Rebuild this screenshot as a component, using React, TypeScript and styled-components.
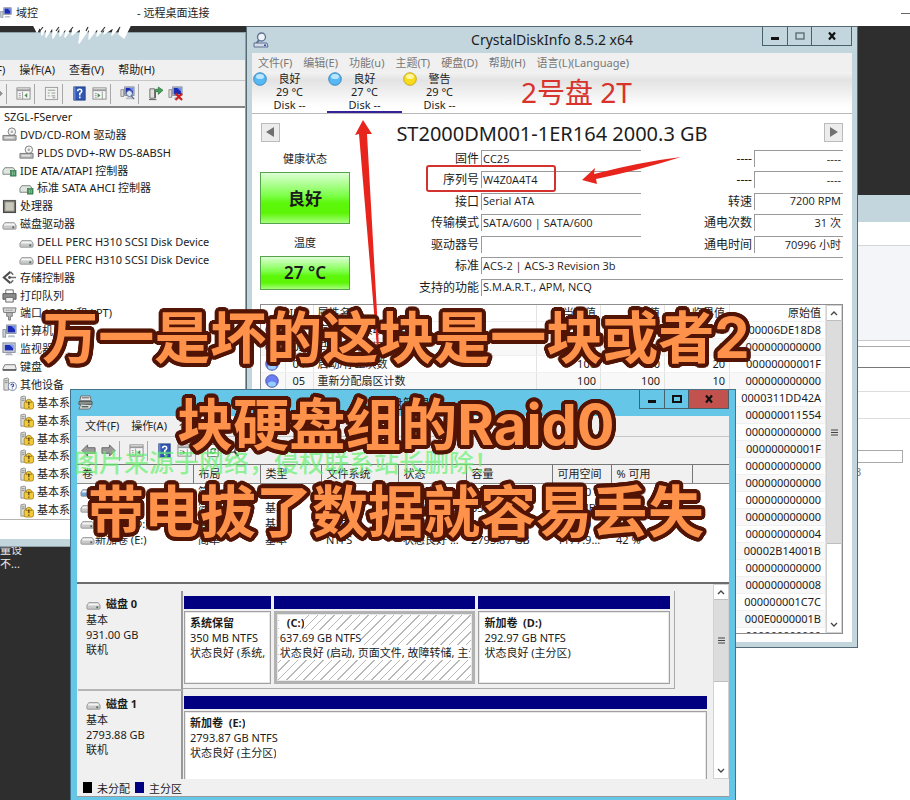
import React from "react";
import styled, { createGlobalStyle, css } from "styled-components";

const GlobalStyle = createGlobalStyle`
  * { box-sizing: border-box; }
  body {
    margin: 0;
    background: #2e2e2e;
    color: #1c1c1c;
    font-family: "Noto Sans", "Noto Sans CJK SC", sans-serif;
    font-size: 11px;
  }
  button, input { font: inherit; color: inherit; }
  svg { display: block; flex: none; }
`;

/* ---------- icons ---------- */

type IconName =
  | "drive" | "dvd" | "ide" | "cpu" | "storage" | "printer" | "port" | "computer"
  | "monitor" | "keyboard" | "unknown" | "warn" | "paneLeft" | "paneRight" | "props"
  | "help" | "scan" | "update" | "remove" | "back" | "forward" | "refresh" | "diskMgr"
  | "blueDrive" | "magnifier" | "search";

const driveShape = (fill: string) => (
  <g>
    <path d="M3 6 L13 6 L15 9 L15 12 Q15 13 14 13 L2 13 Q1 13 1 12 L1 9 Z" fill={fill} stroke="#8c8c8c" strokeWidth=".9" />
    <path d="M3 7 L13 7 L14 9 L2 9 Z" fill="#f4f4f4" />
    <rect x="11" y="10" width="2" height="2" fill="#4f6a52" />
  </g>
);

const screenShape = (
  <g>
    <rect x="5" y="1" width="10" height="9" fill="#cdd3de" stroke="#6f7686" strokeWidth=".8" />
    <rect x="6" y="2" width="8" height="7" fill="#1b2bb4" />
    <path d="M10 2 L14 2 L14 6 Z" fill="#6f8df0" />
    <path d="M7 12 L13 12 L14 14 L6 14 Z" fill="#b9bec8" />
  </g>
);

const paneShape = (
  <g>
    <rect x="1" y="2" width="14" height="12" fill="#f6f6f6" stroke="#8c8c8c" />
    <path d="M1 4.5 H15" stroke="#9a9a9a" strokeWidth="2" />
    <path d="M3 8 H5 M3 10 H5 M3 12 H5" stroke="#9a9a9a" />
  </g>
);

const towerShape = (
  <g>
    <path d="M2 2 L6 1 L7 2 L7 14 L2 14 Z" fill="#dcdcd6" stroke="#868686" strokeWidth=".9" />
    <path d="M3 4 H6 M3 6 H6" stroke="#8b8b8b" />
  </g>
);

const icons: Record<IconName, React.ReactNode> = {
  drive: driveShape("#c9c9c9"),
  blueDrive: driveShape("#6da5dc"),
  dvd: (
    <g>
      <circle cx="10.500" cy="5" r="4" fill="#f2f2f2" stroke="#7d7d7d" />
      <circle cx="10.500" cy="5" r="1.300" fill="#aaa" />
      <path d="M1 9 L15 9 L15 14 L1 14 Z" fill="#bcbcbc" stroke="#777" />
      <path d="M3 11.500 H12" stroke="#f5f5f5" />
    </g>
  ),
  ide: (
    <g>
      <path d="M3 5 L12 5 L14 8 L14 12 L1 12 L1 8 Z" fill="#dfe6df" stroke="#7b857b" />
      <rect x="9" y="8" width="6" height="6" fill="#3e8d59" stroke="#2c6b40" strokeWidth=".6" />
      <path d="M11 9 V13 M13 9 V13" stroke="#b9e2c5" strokeWidth=".7" />
    </g>
  ),
  cpu: (
    <g>
      <rect x="1" y="1" width="14" height="14" fill="#4b4b4b" />
      <rect x="3" y="3" width="10" height="10" fill="#c9c6bb" stroke="#8c897c" />
      <path d="M2 2 H15" stroke="#888" strokeDasharray="1 1" />
    </g>
  ),
  storage: (
    <g>
      <path d="M9 2 L2 8 L9 14" fill="none" stroke="#4d4d4d" strokeWidth="2.200" />
      <path d="M9 2 L12 5 M9 14 L12 11 M8 8 H15" fill="none" stroke="#6d6d6d" strokeWidth="1.600" />
      <circle cx="8" cy="8" r="1.500" fill="#555" />
    </g>
  ),
  printer: (
    <g>
      <path d="M4 2 H12 V7 H4 Z" fill="#fff" stroke="#666" />
      <path d="M1 6 H15 V12 H1 Z" fill="#8c8c8c" stroke="#555" />
      <path d="M4 10 H12 V15 H4 Z" fill="#efefef" stroke="#666" />
    </g>
  ),
  port: (
    <g>
      <path d="M1 2 H15 L14 7 H2 Z" fill="#d9d9d9" stroke="#777" />
      <path d="M5 7 H11 V11 H9 V15 H7 V11 H5 Z" fill="#b7b7b7" stroke="#7a7a7a" />
      <path d="M4 4.500 H12" stroke="#666" strokeDasharray="1 1" />
    </g>
  ),
  computer: (
    <g>
      {screenShape}
      <rect x="1" y="6" width="3" height="8" fill="#cbd2da" stroke="#74808c" strokeWidth=".8" />
    </g>
  ),
  monitor: (
    <g>
      <rect x="1" y="1" width="13" height="10" fill="#d2d6dd" stroke="#7c8290" />
      <rect x="3" y="3" width="9" height="6" fill="#1d2fb5" />
      <path d="M8 3 H12 V7 Z" fill="#7d9bf4" />
      <path d="M5 12 H10 L12 14 H3 Z" fill="#b2b6bf" />
    </g>
  ),
  keyboard: (
    <g>
      <path d="M3 5 H14 L15 9 V11 H1 V9 Z" fill="#ececec" stroke="#777" />
      <path d="M1 10.500 H15" stroke="#555" strokeWidth="1.500" />
    </g>
  ),
  unknown: (
    <g>
      {towerShape}
      <circle cx="11" cy="10" r="4.300" fill="#fff" stroke="#7483ac" />
      <path d="M9.500 9 Q9.500 7.500 11 7.500 Q12.500 7.500 12.400 9 Q12 10 11 10.300 V11.200 M11 12.200 V13" fill="none" stroke="#3349a0" strokeWidth="1.200" />
    </g>
  ),
  warn: (
    <g>
      {towerShape}
      <rect x="5.500" y="7" width="10" height="8" rx="2" fill="#f3c93c" stroke="#9b7a12" strokeWidth=".8" />
      <path d="M7.500 8 Q7.500 4.500 10.500 4.500 Q13.500 4.500 13.500 8 Z" fill="#f3c93c" stroke="#9b7a12" strokeWidth=".8" />
      <path d="M10.500 7 V11 M10.500 12.200 V13.600" stroke="#4a3a08" strokeWidth="1.300" />
    </g>
  ),
  paneLeft: (
    <g>
      {paneShape}
      <path d="M7 6 V14" stroke="#9a9a9a" />
      <path d="M12 7.500 V12.500 L9 10 Z" fill="#4e8f4e" />
    </g>
  ),
  paneRight: (
    <g>
      {paneShape}
      <path d="M11 6 V14" stroke="#9a9a9a" />
      <path d="M6 7.500 V12.500 L9 10 Z" fill="#4e8f4e" />
    </g>
  ),
  props: (
    <g>
      <rect x="1.500" y="1.500" width="13" height="13" fill="#f2f2f2" stroke="#9b9b9b" />
      <path d="M4 4.500 H12 M4 7.500 H6 M8 7.500 H12 M4 10.500 H6 M8 10.500 H12 M9 12.500 H12" stroke="#8e9a8e" />
    </g>
  ),
  help: (
    <g>
      <rect x="2" y="1" width="12" height="14" fill="#3057b4" stroke="#233f86" />
      <path d="M3 1 V15" stroke="#86a2e0" />
      <path d="M6 5.500 Q6 3.500 8.200 3.500 Q10.500 3.500 10.300 5.700 Q10 7.200 8.300 8 V10 M8.300 11.300 V13" fill="none" stroke="#fff" strokeWidth="1.700" />
    </g>
  ),
  scan: (
    <g>
      {screenShape}
      <rect x="1" y="4" width="3" height="7" fill="#ddd" stroke="#777" strokeWidth=".8" />
      <circle cx="10" cy="8" r="3.200" fill="#d9e7fa" stroke="#5b6a8c" />
      <path d="M12 10.500 L15 14" stroke="#5b6a8c" strokeWidth="1.500" />
    </g>
  ),
  update: (
    <g>
      <path d="M2 3 H7 V13 H2 Z" fill="#e1e1dc" stroke="#666" />
      <path d="M1 14.500 H9" stroke="#555" />
      <path d="M8 13 V6 H11 V9 L16 4.500 L11 1 V3.500 H8 Z" fill="#43a05a" stroke="#256d38" strokeWidth=".7" />
    </g>
  ),
  remove: (
    <g>
      {screenShape}
      <rect x="1" y="4" width="3" height="8" fill="#ddd" stroke="#777" strokeWidth=".8" />
      <path d="M8 8 L15 15 M15 8 L8 15" stroke="#cf1f1f" strokeWidth="2.200" />
    </g>
  ),
  back: <path d="M1 8 L7 2 V5 H15 V11 H7 V14 Z" fill="#9a9a9a" stroke="#686868" />,
  forward: <path d="M15 8 L9 2 V5 H1 V11 H9 V14 Z" fill="#9a9a9a" stroke="#686868" />,
  refresh: (
    <g>
      <path d="M3 1.500 H11 L14 4.500 V14.500 H3 Z" fill="#fff" stroke="#666" />
      <path d="M6 8 A3 3 0 0 1 11 7 M11 9 A3 3 0 0 1 6 10" fill="none" stroke="#2e8a3e" strokeWidth="1.500" />
      <path d="M12 5 V8 H9 Z M5 12 V9 H8 Z" fill="#2e8a3e" />
    </g>
  ),
  search: (
    <g>
      <circle cx="7" cy="6" r="4" fill="#fff" stroke="#555" strokeWidth="1.500" />
      <path d="M10 9 L14 14" stroke="#333" strokeWidth="2" />
    </g>
  ),
  diskMgr: (
    <g>
      <path d="M3 1 H13 L14 6 H2 Z" fill="#e8e8e8" stroke="#6d6d6d" />
      <path d="M4 3 H12" stroke="#555" />
      <path d="M1 7 H15 V10 H1 Z" fill="#8d9790" stroke="#555" />
      <path d="M3 10 L1 15 H12 L15 11" fill="#dcdcdc" stroke="#6d6d6d" />
      <path d="M4 12.500 H11" stroke="#4b6b56" strokeWidth="1.500" />
    </g>
  ),
  magnifier: (
    <g>
      <circle cx="8.500" cy="5" r="4" fill="#eef3f8" stroke="#5e6f92" strokeWidth="1.300" />
      <path d="M6 8 L3 12" stroke="#5e6f92" strokeWidth="2" />
      <path d="M1 11 H14 L15 15 H1 Z" fill="#d5dbe6" stroke="#5e6f92" />
      <rect x="11" y="12.500" width="2" height="1.500" fill="#2c4ec0" />
    </g>
  ),
};

const Icon = ({ name, size = 15 }: { name: IconName; size?: number }) => (
  <svg width={size} height={size} viewBox="0 0 16 16" aria-hidden="true">{icons[name]}</svg>
);

const Ball = ({ hue, size = 14 }: { hue: "blue" | "yellow" | "violet"; size?: number }) => {
  const [light, mid, edge] = {
    blue: ["#d4f1ff", "#58b8f3", "#2a78b8"],
    yellow: ["#fffbc0", "#f8dc1c", "#b89a10"],
    violet: ["#9fe4ff", "#6a7df2", "#46469c"],
  }[hue];
  return (
    <svg width={size} height={size} viewBox="0 0 14 14" aria-hidden="true">
      <circle cx="7" cy="7" r="6.300" fill={mid} stroke={edge} strokeWidth=".8" />
      <ellipse cx="7" cy={hue === "violet" ? 10 : 4.5} rx="4" ry="2.600" fill={light} opacity=".8" />
    </svg>
  );
};

/* ---------- desktop and shared window parts ---------- */

const Desktop = styled.main`
  position: relative;
  min-height: 100vh;
  overflow: hidden;
`;

const SessionBar = styled.header`
  display: flex;
  align-items: center;
  height: 26px;
  background: #fff;
  line-height: 24px;
`;
const SessionName = styled.span`
  width: 125px;
  padding-left: 4px;
`;
const SessionMinimize = styled.button`
  width: 9px;
  height: 20px;
  margin-left: auto;
  padding: 0;
  border: 0;
  background: linear-gradient(#666, #666) center / 100% 1px no-repeat;
`;

const Scribble = styled.svg`
  position: absolute;
  left: 28px;
  top: 22px;
`;

const DeskLabel = styled.div`
  position: absolute;
  left: 0;
  top: 543px;
  color: #e8e8e8;
  line-height: 14px;
`;

const WindowFrame = styled.section<{ $tone: string; $edge: string }>`
  position: absolute;
  display: flex;
  flex-direction: column;
  padding: 0 6px 6px;
  background: ${(p) => p.$tone};
  border: 1px solid ${(p) => p.$edge};
`;
const TitleBar = styled.div<{ $height: number }>`
  display: flex;
  align-items: flex-start;
  flex: none;
  height: ${(p) => p.$height}px;
`;
const TitleIcon = styled.span`
  width: 90px;
  padding: 5px 1px;
`;
const TitleText = styled.h1`
  flex: 1;
  margin: 0;
  font-size: 13px;
  font-weight: 400;
  line-height: 26px;
  text-align: center;
`;
const Controls = styled.div`
  display: flex;
  border: 1px solid #46606c;
  border-top: 0;
`;
const ControlButton = styled.button<{ $width: number; $danger?: boolean }>`
  display: flex;
  align-items: center;
  justify-content: center;
  width: ${(p) => p.$width}px;
  height: 18px;
  padding: 0;
  border: 0;
  border-left: 1px solid #46606c;
  background: ${(p) => (p.$danger ? "#c2524e" : "transparent")};
  &:first-child { border-left: 0; }
`;

const WindowControls = ({ danger, dim }: { danger?: boolean; dim?: boolean }) => (
  <Controls>
    <ControlButton $width={24} aria-label="最小化">
      <svg width="10" height="10" viewBox="0 0 10 10"><path d="M1 7.500 H9" stroke="#111" strokeWidth="3" /></svg>
    </ControlButton>
    <ControlButton $width={24} aria-label="最大化">
      <svg width="10" height="10" viewBox="0 0 10 10"><rect x="1" y="2" width="8" height="6" fill="none" stroke={dim ? "#55666e" : "#111"} strokeWidth={dim ? 1.3 : 2} /></svg>
    </ControlButton>
    <ControlButton $width={40} $danger={danger} aria-label="关闭">
      <svg width="10" height="10" viewBox="0 0 10 10"><path d="M2 1.500 L8 8.500 M8 1.500 L2 8.500" stroke="#111" strokeWidth="2.200" /></svg>
    </ControlButton>
  </Controls>
);

const MenuBar = styled.nav<{ $gap: number; $muted?: boolean; $pad: number; $height: number }>`
  display: flex;
  align-items: center;
  flex: none;
  gap: ${(p) => p.$gap}px;
  height: ${(p) => p.$height}px;
  padding-left: ${(p) => p.$pad}px;
  background: #f0f0f0;
  color: ${(p) => (p.$muted ? "#777" : "#1c1c1c")};
`;
const MenuButton = styled.button`
  padding: 0;
  border: 0;
  background: none;
  white-space: nowrap;
  line-height: 18px;
`;
const ToolBar = styled.div<{ $pad: number; $height: number }>`
  display: flex;
  align-items: center;
  flex: none;
  gap: 5px;
  height: ${(p) => p.$height}px;
  padding-left: ${(p) => p.$pad}px;
  background: #f0f0f0;
  border-top: 1px solid #c6c6c6;
`;
const ToolButton = styled.button`
  padding: 0;
  border: 0;
  background: none;
`;
const Separator = styled.span`
  width: 1px;
  height: 20px;
  margin: 0 4px 0 -2px;
  background: #a8a8a8;
`;

const Tools = ({ items }: { items: (IconName | "|")[] }) => (
  <>
    {items.map((item, i) =>
      item === "|" ? <Separator key={i} /> : (
        <ToolButton key={i} aria-label={item}><Icon name={item} /></ToolButton>
      ),
    )}
  </>
);

/* ---------- scroll bar ---------- */

const ScrollTrack = styled.div`
  display: flex;
  flex-direction: column;
  flex: none;
  width: 16px;
  background: #fff;
  border: 1px solid #d2d2d2;
`;
const ScrollEnd = styled.button`
  display: flex;
  align-items: center;
  justify-content: center;
  height: 14px;
  padding: 0;
  border: 0;
  background: #fff;
`;
const ScrollThumb = styled.div<{ $size: number }>`
  display: flex;
  align-items: center;
  justify-content: center;
  height: ${(p) => p.$size}px;
  margin-bottom: auto;
  background: #dcdcdc;
  border: 1px solid #bebebe;
  border-width: 1px 0;
`;

const ScrollBar = ({ thumb }: { thumb: number }) => (
  <ScrollTrack>
    <ScrollEnd aria-label="向上"><svg width="8" height="6" viewBox="0 0 8 6"><path d="M1 5 L4 2 L7 5" fill="none" stroke="#444" strokeWidth="1.300" /></svg></ScrollEnd>
    <ScrollThumb $size={thumb}>
      <svg width="7" height="7" viewBox="0 0 7 7"><path d="M0 1 H7 M0 3.500 H7 M0 6 H7" stroke="#444" /></svg>
    </ScrollThumb>
    <ScrollEnd aria-label="向下"><svg width="8" height="6" viewBox="0 0 8 6"><path d="M1 1 L4 4 L7 1" fill="none" stroke="#444" strokeWidth="1.300" /></svg></ScrollEnd>
  </ScrollTrack>
);

/* ---------- device manager ---------- */

const DeviceWindow = styled(WindowFrame)`
  left: -40px;
  top: 32px;
  width: 286px;
  padding: 0 0 7px;
`;
const TreePane = styled.div`
  height: 433px;
  background: #fff;
  border-top: 2px solid #858585;
`;
const Tree = styled.ul`
  display: grid;
  grid-auto-rows: 1fr;
  height: 412px;
  margin: 0;
  padding: 0;
  list-style: none;
  border-bottom: 1px solid #b5b5b5;
`;
const TreeItem = styled.li<{ $depth: number }>`
  display: flex;
  align-items: center;
  gap: 3px;
  padding-left: ${(p) => [43, 41, 58][p.$depth]}px;
  white-space: nowrap;
  line-height: 16px;
`;

const devices: [number, IconName | null, string][] = [
  [0, null, "SZGL-FServer"],
  [1, "dvd", "DVD/CD-ROM 驱动器"],
  [2, "dvd", "PLDS DVD+-RW DS-8ABSH"],
  [1, "ide", "IDE ATA/ATAPI 控制器"],
  [2, "ide", "标准 SATA AHCI 控制器"],
  [1, "cpu", "处理器"],
  [1, "drive", "磁盘驱动器"],
  [2, "drive", "DELL PERC H310 SCSI Disk Device"],
  [2, "drive", "DELL PERC H310 SCSI Disk Device"],
  [1, "storage", "存储控制器"],
  [1, "printer", "打印队列"],
  [1, "port", "端口 (COM 和 LPT)"],
  [1, "computer", "计算机"],
  [1, "monitor", "监视器"],
  [1, "keyboard", "键盘"],
  [1, "unknown", "其他设备"],
  ...Array.from({ length: 7 }, (): [number, IconName, string] => [2, "warn", "基本系统设备"]),
];

const DeviceManager = () => (
  <DeviceWindow $tone="#c3d6de" $edge="#8fa3ab">
    <TitleBar $height={27} />
    <MenuBar $gap={14} $pad={10} $height={20}>
      {["文件(F)", "操作(A)", "查看(V)", "帮助(H)"].map((m) => <MenuButton key={m}>{m}</MenuButton>)}
    </MenuBar>
    <ToolBar $pad={27} $height={26}>
      <Tools items={["forward", "|", "paneLeft", "|", "props", "|", "help", "paneRight", "|", "scan", "|", "update", "remove"]} />
    </ToolBar>
    <TreePane>
      <Tree>
        {devices.map(([depth, icon, label], i) => (
          <TreeItem key={i} $depth={depth}>{icon && <Icon name={icon} />}{label}</TreeItem>
        ))}
      </Tree>
    </TreePane>
  </DeviceWindow>
);

/* ---------- background window ---------- */

const BackWindow = styled.section`
  position: absolute;
  left: 736px;
  right: 0;
  top: 195px;
  bottom: 0;
  background: #fff;
  border-top: 27px solid #c3d6de;
`;
const BackBand = styled.div`
  height: 96px;
  margin-top: 23px;
  background: #f4f5f8;
  border-top: 1px solid #d5d7da;
  border-bottom: 1px solid #c9c9c9;
`;
const BackRow = styled.div<{ $height: number; $line: string }>`
  height: ${(p) => p.$height}px;
  border-bottom: 1px solid ${(p) => p.$line};
`;
const BackField = styled.div`
  height: 13px;
  margin: 31px 7px 0 0;
  border: 1px solid #aaa;
`;
const BackText = styled.div`
  padding-left: 119px;
  color: #777;
  line-height: 18px;
`;

/* ---------- CrystalDiskInfo ---------- */

const InfoWindow = styled(WindowFrame)`
  left: 246px;
  right: 52px;
  top: 26px;
  padding: 0 5px 5px;
`;
const InfoTitle = styled(TitleText)`
  font-size: 14px;
  white-space: nowrap;
`;
const DiskTabs = styled.div`
  display: flex;
  height: 42px;
  background: linear-gradient(#f3f3f3, #e3e3e3 20%, #fff 85%);
  border-bottom: 1px solid #b9b9b9;
`;
const DiskTab = styled.button<{ $active?: boolean }>`
  display: flex;
  align-items: flex-start;
  width: 75px;
  padding: 0 0 0 1px;
  border: 0;
  background: none;
  ${(p) => p.$active && css`box-shadow: inset 0 -2px #34239b;`}
`;
const DiskTabText = styled.span`
  flex: 1;
  padding-right: 15px;
  line-height: 13px;
  white-space: pre;
  text-align: center;
`;
const InfoBody = styled.div`
  padding: 0 9px 8px 8px;
  background: #fff;
`;
const ModelRow = styled.div`
  display: flex;
  align-items: center;
  justify-content: space-between;
  height: 36px;
  padding-left: 1px;
`;
const StepButton = styled.button`
  display: flex;
  align-items: center;
  justify-content: center;
  width: 19px;
  height: 19px;
  padding: 0;
  border: 1px solid #bbb;
  background: #ececec;
`;
const Model = styled.h2`
  margin: 0;
  padding-top: 3px;
  font-size: 20px;
  font-weight: 400;
  line-height: 33px;
  white-space: nowrap;
`;
const Summary = styled.div`
  display: flex;
  height: 150px;
`;
const Health = styled.div`
  display: flex;
  flex-direction: column;
  width: 90px;
  text-align: center;
`;
const HealthLabel = styled.span`
  line-height: 18px;
`;
const HealthButton = styled.button<{ $height: number }>`
  height: ${(p) => p.$height}px;
  margin: 4px 0 10px;
  padding: 0;
  border: 1px solid #57a34c;
  background: linear-gradient(#ddffd5, #7dff4a 45%, #5cf70a 60%, #5cf505 80%, #a6ff7c);
  font-size: 17px;
  font-weight: 600;
`;
const Fields = styled.div`
  display: grid;
  flex: 1;
  grid-template-columns: 131px 160px 1fr 89px;
  grid-auto-rows: 1fr;
`;
const FieldLabel = styled.label`
  padding-right: 2px;
  font-size: 12px;
  line-height: 17px;
  text-align: right;
  white-space: nowrap;
`;
const FieldBox = styled.input<{ $wide?: boolean; $right?: boolean }>`
  width: 100%;
  min-width: 0;
  height: 17px;
  padding: 0 2px 2px 1px;
  border: 1px solid #9a9a9a;
  border-width: 1px 0 0 1px;
  background: #fff;
  font-family: "Open Sans", "Noto Sans CJK SC", sans-serif;
  text-align: ${(p) => (p.$right ? "right" : "left")};
  ${(p) => p.$wide && css`grid-column: 2 / -1;`}
`;

const fields: { label: string; value: string; right?: boolean; wide?: boolean }[] = [
  { label: "固件", value: "CC25" },
  { label: "----", value: "----", right: true },
  { label: "序列号", value: "W4Z0A4T4" },
  { label: "----", value: "----", right: true },
  { label: "接口", value: "Serial ATA" },
  { label: "转速", value: "7200 RPM", right: true },
  { label: "传输模式", value: "SATA/600 | SATA/600" },
  { label: "通电次数", value: "31 次", right: true },
  { label: "驱动器号", value: "" },
  { label: "通电时间", value: "70996 小时", right: true },
  { label: "标准", value: "ACS-2 | ACS-3 Revision 3b", wide: true },
  { label: "支持的功能", value: "S.M.A.R.T., APM, NCQ", wide: true },
];

const AttributePane = styled.div`
  display: flex;
  height: 330px;
  margin-top: 4px;
  overflow: hidden;
  border: 1px solid #8e8e8e;
`;
const AttributeScroll = styled.div`
  flex: 1;
  overflow: hidden;
`;
const AttributeTable = styled.table`
  width: 100%;
  table-layout: fixed;
  border-collapse: collapse;
  th, td {
    height: 17px;
    padding: 0 4px;
    border-right: 1px solid #e3e3e3;
    border-bottom: 1px solid #f0f0f0;
    font-weight: 400;
    line-height: 16px;
    text-align: right;
    white-space: nowrap;
  }
  th {
    height: 16px;
    line-height: 15px;
  }
  tbody tr:nth-child(even) { background: #f8f8f8; }
  th:nth-child(-n + 3), td:nth-child(-n + 3) { text-align: left; }
  td:nth-child(2) { padding-left: 7px; }
`;

const raws = [
  "000006DE18D8", "000000000000", "00000000001F", "000000000000", "0000311DD42A",
  "000000011554", "000000000000", "00000000001F", "000000000000", "000000000000",
  "000000000000", "000000000000", "000000000004", "00002B14001B", "000000000000",
  "000000000008", "000000001C7C", "000E0000001B", "000000000000",
];
const attributes: string[][] = [
  ["01", "底层数据读取错误率", "118", "99", "6"],
  ["03", "马达旋转时间", "96", "96", "0"],
  ["04", "启动/停止次数", "100", "100", "20"],
  ["05", "重新分配扇区计数", "100", "100", "10"],
];

const DiskInfo = () => (
  <InfoWindow $tone="#c3d6de" $edge="#566a73">
    <TitleBar $height={26}>
      <TitleIcon><Icon name="magnifier" size={16} /></TitleIcon>
      <InfoTitle>CrystalDiskInfo 8.5.2 x64</InfoTitle>
      <WindowControls dim />
    </TitleBar>
    <MenuBar $gap={11} $pad={6} $height={19} $muted>
      {["文件(F)", "编辑(E)", "功能(u)", "主题(T)", "硬盘(D)", "帮助(H)", "语言(L)(Language)"].map((m) => (
        <MenuButton key={m}>{m}</MenuButton>
      ))}
    </MenuBar>
    <DiskTabs>
      <DiskTab><Ball hue="blue" /><DiskTabText>{"良好\n29 °C\nDisk --"}</DiskTabText></DiskTab>
      <DiskTab $active><Ball hue="blue" /><DiskTabText>{"良好\n27 °C\nDisk --"}</DiskTabText></DiskTab>
      <DiskTab><Ball hue="yellow" /><DiskTabText>{"警告\n29 °C\nDisk --"}</DiskTabText></DiskTab>
    </DiskTabs>
    <InfoBody>
      <ModelRow>
        <StepButton aria-label="上一个"><svg width="9" height="10" viewBox="0 0 9 10"><path d="M8 0 V10 L0 5 Z" fill="#707070" /></svg></StepButton>
        <Model>ST2000DM001-1ER164 2000.3 GB</Model>
        <StepButton aria-label="下一个"><svg width="9" height="10" viewBox="0 0 9 10"><path d="M1 0 V10 L9 5 Z" fill="#707070" /></svg></StepButton>
      </ModelRow>
      <Summary>
        <Health>
          <HealthLabel>健康状态</HealthLabel>
          <HealthButton $height={53}>良好</HealthButton>
          <HealthLabel>温度</HealthLabel>
          <HealthButton $height={35}>27 °C</HealthButton>
        </Health>
        <Fields>
          {fields.map((f, i) => (
            <React.Fragment key={i}>
              <FieldLabel htmlFor={`field-${i}`}>{f.label}</FieldLabel>
              <FieldBox id={`field-${i}`} readOnly value={f.value} $right={f.right} $wide={f.wide} />
            </React.Fragment>
          ))}
        </Fields>
      </Summary>
      <AttributePane>
        <AttributeScroll>
          <AttributeTable>
            <colgroup>
              <col width="24" /><col width="28" /><col /><col width="64" /><col width="64" /><col width="65" /><col width="96" />
            </colgroup>
            <thead>
              <tr><th /><th>ID</th><th>属性名</th><th>当前值</th><th>最差值</th><th>临界值</th><th>原始值</th></tr>
            </thead>
            <tbody>
              {raws.map((raw, i) => {
                const row = attributes[i];
                return (
                  <tr key={i}>
                    <td>{row && <Ball hue="violet" />}</td>
                    {[0, 1, 2, 3, 4].map((c) => <td key={c}>{row?.[c]}</td>)}
                    <td>{raw}</td>
                  </tr>
                );
              })}
            </tbody>
          </AttributeTable>
        </AttributeScroll>
        <ScrollBar thumb={224} />
      </AttributePane>
    </InfoBody>
  </InfoWindow>
);

/* ---------- disk management ---------- */

const ManagerWindow = styled(WindowFrame)`
  left: 70px;
  right: 174px;
  top: 389px;
`;
const VolumePane = styled.div`
  height: 120px;
  background: #fff;
  border-top: 1px solid #777;
  border-bottom: 2px solid #6c6c6c;
`;
const VolumeTable = styled.table`
  width: 100%;
  table-layout: fixed;
  border-collapse: collapse;
  th {
    height: 18px;
    padding: 0 5px;
    border-right: 1px solid #777;
    border-bottom: 1px solid #8a8a8a;
    background: #f0f0f0;
    font-weight: 400;
    line-height: 17px;
    text-align: left;
    white-space: nowrap;
  }
  th:last-child { border-right: 0; }
  td {
    height: 16px;
    padding: 0 5px;
    line-height: 16px;
    overflow: hidden;
    text-overflow: ellipsis;
    white-space: nowrap;
  }
  td:first-child { padding-left: 3px; }
`;
const VolumeName = styled.span`
  display: flex;
  align-items: center;
`;
const GraphPane = styled.div`
  display: flex;
  height: 195px;
  background: #f0f0f0;
`;
const DiskList = styled.div`
  flex: 1;
  min-width: 0;
  padding: 7px 2px 0 1px;
  overflow: hidden;
`;
const DiskRow = styled.div`
  display: flex;
  height: 100px;
`;
const DiskCaption = styled.div`
  width: 105px;
  padding: 5px 8px;
  border-right: 2px solid #999;
  border-bottom: 2px solid #b5b5b5;
  line-height: 15px;
`;
const DiskTitle = styled.strong`
  display: flex;
  align-items: center;
  gap: 5px;
  line-height: 16px;
`;
const Partitions = styled.div<{ $short?: boolean }>`
  display: flex;
  flex: 1;
  gap: 3px;
  min-width: 0;
  margin-right: ${(p) => (p.$short ? 36 : 0)}px;
  padding: 5px 4px 4px 1px;
  border-right: ${(p) => (p.$short ? "1px solid #aaa" : 0)};
  border-bottom: ${(p) => (p.$short ? "1px solid #aaa" : 0)};
  margin-bottom: 2px;
`;
const Partition = styled.div<{ $share: number }>`
  display: flex;
  flex-direction: column;
  flex: ${(p) => p.$share} 1 0;
  min-width: 0;
  border-top: 13px solid #000080;
`;
const PartitionBody = styled.div<{ $selected?: boolean }>`
  flex: 1;
  margin-top: 2px;
  padding: 3px 4px;
  overflow: hidden;
  line-height: 15px;
  white-space: nowrap;
  background: #fff;
  border: 1px solid #a0a0a0;
  box-shadow: inset 0 0 0 1px #e8e8e8;
  ${(p) => p.$selected && css`
    padding: 1px 2px;
    border: 3px solid #b2b2b2;
    background: repeating-linear-gradient(135deg, #fff 0 5px, #b8b8b8 5px 6px);
  `}
`;
const PartitionLine = styled.div<{ $selected?: boolean; $strong?: boolean }>`
  width: fit-content;
  max-width: 100%;
  overflow: hidden;
  padding-left: ${(p) => (p.$selected && p.$strong ? 8 : 1)}px;
  font-weight: ${(p) => (p.$strong ? 700 : 400)};
  white-space: pre;
  background: #fff;
`;
const Legend = styled.div`
  display: flex;
  align-items: center;
  gap: 5px;
  height: 18px;
  padding-left: 6px;
  background: #f0f0f0;
  border-bottom: 1px solid #999;
`;
const Swatch = styled.span<{ $color: string }>`
  width: 9px;
  height: 11px;
  background: ${(p) => p.$color};
`;

const volumes: [IconName, ...string[]][] = [
  ["blueDrive", " (C:)", "简单", "基本", "NTFS", "状态良好 (启动)", "637.69 GB", "590.70 GB", "93 %"],
  ["drive", "系统保留", "简单", "基本", "NTFS", "状态良好 (系统)", "350 MB", "115 MB", "33 %"],
  ["drive", "新加卷 (D:)", "简单", "基本", "NTFS", "状态良好 (主分区)", "292.97 GB", "132.80 GB", "45 %"],
  ["drive", "新加卷 (E:)", "简单", "基本", "NTFS", "状态良好 (主分区)", "2793.87 GB", "1177.91 GB", "42 %"],
];

const PartitionCell = ({ share, lines, selected }: { share: number; lines: string[]; selected?: boolean }) => (
  <Partition $share={share}>
    <PartitionBody $selected={selected}>
      {lines.map((l, i) => <PartitionLine key={l} $strong={i === 0} $selected={selected}>{l}</PartitionLine>)}
    </PartitionBody>
  </Partition>
);

const DiskManager = () => (
  <ManagerWindow $tone="#66c6e8" $edge="#43738a">
    <TitleBar $height={26}>
      <TitleIcon><Icon name="diskMgr" /></TitleIcon>
      <TitleText>磁盘管理</TitleText>
      <WindowControls danger />
    </TitleBar>
    <MenuBar $gap={12} $pad={8} $height={20}>
      {["文件(F)", "操作(A)", "查看(V)", "帮助(H)"].map((m) => <MenuButton key={m}>{m}</MenuButton>)}
    </MenuBar>
    <ToolBar $pad={4} $height={28}>
      <Tools items={["back", "forward", "|", "paneLeft", "|", "help", "paneRight", "|", "refresh", "search"]} />
    </ToolBar>
    <VolumePane>
      <VolumeTable>
        <colgroup>
          <col width="116" /><col width="67" /><col width="61" /><col width="77" /><col width="68" /><col width="86" /><col width="59" /><col width="81" /><col />
        </colgroup>
        <thead>
          <tr>{["卷", "布局", "类型", "文件系统", "状态", "容量", "可用空间", "% 可用", ""].map((h) => <th key={h}>{h}</th>)}</tr>
        </thead>
        <tbody>
          {volumes.map(([icon, name, ...cells]) => (
            <tr key={name}>
              <td><VolumeName><Icon name={icon} />{name}</VolumeName></td>
              {cells.map((c, i) => <td key={i}>{c}</td>)}
              <td />
            </tr>
          ))}
        </tbody>
      </VolumeTable>
    </VolumePane>
    <GraphPane>
      <DiskList>
        <DiskRow>
          <DiskCaption>
            <DiskTitle><Icon name="drive" />磁盘 0</DiskTitle>基本<br />931.00 GB<br />联机
          </DiskCaption>
          <Partitions $short>
            <PartitionCell share={87} lines={["系统保留", "350 MB NTFS", "状态良好 (系统, 活动, 主分区)"]} />
            <PartitionCell share={202} selected lines={["(C:)", "637.69 GB NTFS", "状态良好 (启动, 页面文件, 故障转储, 主分区)"]} />
            <PartitionCell share={192} lines={["新加卷  (D:)", "292.97 GB NTFS", "状态良好 (主分区)"]} />
          </Partitions>
        </DiskRow>
        <DiskRow>
          <DiskCaption>
            <DiskTitle><Icon name="drive" />磁盘 1</DiskTitle>基本<br />2793.88 GB<br />联机
          </DiskCaption>
          <Partitions>
            <PartitionCell share={1} lines={["新加卷  (E:)", "2793.87 GB NTFS", "状态良好 (主分区)"]} />
          </Partitions>
        </DiskRow>
      </DiskList>
      <ScrollBar thumb={83} />
    </GraphPane>
    <Legend>
      <Swatch $color="#000" />未分配
      <Swatch $color="#000080" />主分区
    </Legend>
  </ManagerWindow>
);

/* ---------- annotations ---------- */

const Note = styled.div`
  position: absolute;
  left: 521px;
  top: 74px;
  color: #d8322c;
  font-size: 28px;
  line-height: 36px;
`;
const SerialMark = styled.div`
  position: absolute;
  left: 426px;
  top: 165px;
  width: 130px;
  height: 27px;
  border: 2px solid #d3322e;
  border-radius: 3px;
`;
const Arrows = styled.svg`
  position: absolute;
  left: 340px;
  top: 110px;
`;
const Watermark = styled.div`
  position: absolute;
  left: 74px;
  top: 443px;
  color: rgba(100, 240, 110, 0.7);
  font-family: "Noto Sans CJK SC", sans-serif;
  font-size: 25px;
  font-weight: 500;
  line-height: 36px;
  white-space: nowrap;
`;

const ring = (radius: number, steps: number, color: string) =>
  Array.from({ length: steps }, (_, i) => {
    const angle = (i / steps) * Math.PI * 2;
    return `${(Math.cos(angle) * radius).toFixed(2)}px ${(Math.sin(angle) * radius).toFixed(2)}px 0 ${color}`;
  }).join(", ");

const Caption = styled.div`
  position: absolute;
  left: 0;
  right: 118px;
  top: 295px;
  color: #ff924a;
  font-family: Inter, "Noto Sans CJK SC", sans-serif;
  font-size: 56px;
  font-weight: 700;
  line-height: 87px;
  text-align: center;
  white-space: nowrap;
  text-shadow: ${ring(4, 24, "#521505")}, ${ring(2, 12, "#521505")};
`;

export default function App() {
  return (
    <Desktop>
      <GlobalStyle />
      <SessionBar>
        <Icon name="computer" size={12} />
        <SessionName>域控</SessionName>
        <span>- 远程桌面连接</span>
        <SessionMinimize aria-label="最小化" />
      </SessionBar>
      <BackWindow>
        <BackBand />
        <BackRow $height={6} $line="#aaa" />
        <BackRow $height={21} $line="#777" />
        <BackRow $height={24} $line="#ddd" />
        <BackRow $height={27} $line="#ddd" />
        <BackField />
        <BackText>3</BackText>
      </BackWindow>
      <DeskLabel>量设<br />不...</DeskLabel>
      <DeviceManager />
      <DiskInfo />
      <Note>2号盘 2T</Note>
      <SerialMark />
      <Arrows width="345" height="240" viewBox="340 110 345 240">
        <path d="M363 120 L372 134 L367 134 L379 348 L377 348 L359 134 L355 135 Z" fill="#e8251d" />
        <path d="M582 180 L595 168 L594 174 Q640 162 681 157 Q640 170 596 179 L597 184 Z" fill="#e8251d" />
      </Arrows>
      <DiskManager />
      <Scribble width="106" height="22" viewBox="28 22 106 22">
        <path
          d="M32 22 L37 32 L40 26 L42 35 L47 26 L46 37 L53 26 L53 38 L60 26 L60 36 L67 26 L65 37 L73 26 L72 35 L81 28 L79 43 L90 27 L89 39 L99 26 L97 36 L106 27 L104 34 L114 27 L112 35 L121 26 L119 34 L124 38 L130 26 L126 22 Z"
          fill="#fff" stroke="#fff" strokeWidth="1.500" strokeLinejoin="round"
        />
        <path d="M39 32 L43 27 M56 31 L59 27 M69 32 L73 27 M86 31 L88 27 M101 32 L105 27 M117 32 L120 27" stroke="#333" strokeWidth="1.200" />
      </Scribble>
      <Watermark>图片来源于网络，侵权联系站长删除！</Watermark>
      <Caption>万一是坏的这块是一块或者2<br />块硬盘组的Raid0<br />带电拔了数据就容易丢失</Caption>
    </Desktop>
  );
}
